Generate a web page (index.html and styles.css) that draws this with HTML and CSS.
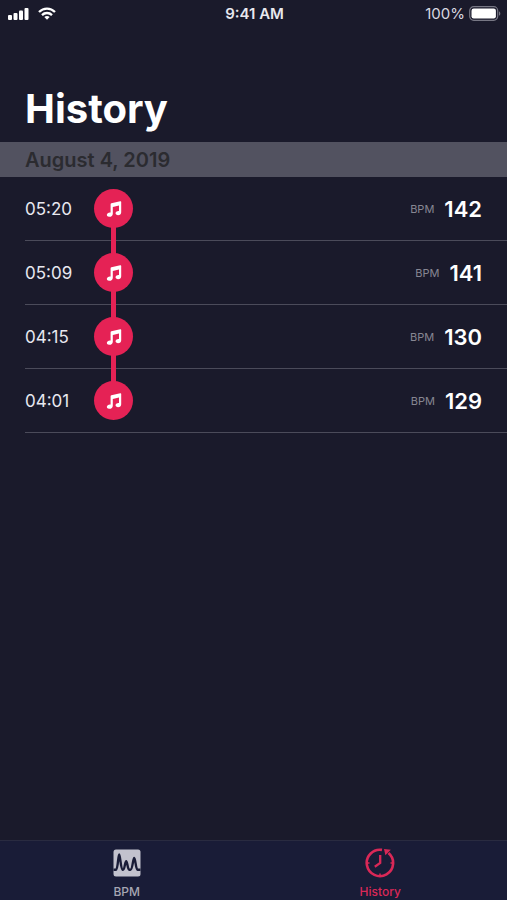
FILE: index.html
```html
<!DOCTYPE html>
<html lang="en">
<head>
<meta charset="utf-8">
<meta name="viewport" content="width=device-width, initial-scale=1">
<title>History</title>
<link rel="stylesheet" href="styles.css">
</head>
<body>
<svg class="defs" aria-hidden="true">
  <symbol id="note" viewBox="0 0 16 16">
    <path fill="currentColor" d="M4.600 3.200Q4.700 2.500 5.400 2.300L14.200.2Q15.200 0 15.200 1V11.200C15.200 13 13.900 14.200 12 14.200C9.700 14.200 8.900 12.400 10 11.100C10.900 10.200 12.100 10.100 13 10.100V4.600L6.800 6.100V12.700C6.800 14.600 5.300 15.800 3.400 15.800C1 15.800.2 14 1.300 12.700C2.200 11.700 3.600 11.600 4.600 11.600Z"/>
  </symbol>
</svg>
<div class="status">
  <div class="status-side">
    <svg class="signal" viewBox="0 0 21 13" aria-label="Signal">
      <g fill="#fff"><rect x="0" y="8" width="4" height="5" rx="1"/><rect x="5.500" y="6" width="4" height="7" rx="1"/><rect x="11" y="3.500" width="4" height="9.500" rx="1"/><rect x="16.500" y="1" width="4" height="12" rx="1"/></g>
    </svg>
    <svg class="wifi" viewBox="0 0 18 13" aria-label="Wi-Fi">
      <g fill="none" stroke="#fff" stroke-width="2.300"><path d="M1 5C5.500.4 12.500.4 17 5"/><path d="M4 8.100C6.800 5.300 11.200 5.300 14 8.100"/></g>
      <path fill="#fff" d="M6.300 10C7.800 8.700 10.200 8.700 11.700 10L9 12.800Z"/>
    </svg>
  </div>
  <time class="clock">9:41 AM</time>
  <div class="status-side status-end">
    <span class="charge">100%</span>
    <svg class="battery" viewBox="0 0 32 15" aria-label="Battery">
      <rect x=".7" y=".7" width="28" height="13.600" rx="4" fill="none" stroke="#777784" stroke-width="1.200"/>
      <rect x="2.500" y="2.500" width="24.400" height="10" rx="2.200" fill="#fff"/>
      <path d="M30 5.200C31.800 6 31.800 9 30 9.800Z" fill="#777784"/>
    </svg>
  </div>
</div>
<main>
  <h1>History</h1>
  <section>
    <h2>August 4, 2019</h2>
    <ul class="entries">
      <li><time>05:20</time><span class="dot"><svg><use href="#note"/></svg></span><span class="unit">BPM</span><strong>142</strong></li>
      <li><time>05:09</time><span class="dot"><svg><use href="#note"/></svg></span><span class="unit">BPM</span><strong>141</strong></li>
      <li><time>04:15</time><span class="dot"><svg><use href="#note"/></svg></span><span class="unit">BPM</span><strong>130</strong></li>
      <li><time>04:01</time><span class="dot"><svg><use href="#note"/></svg></span><span class="unit">BPM</span><strong>129</strong></li>
    </ul>
  </section>
</main>
<nav>
  <a href="#bpm">
    <svg viewBox="0 0 30 30" aria-hidden="true">
      <rect x="1.500" y="1.500" width="27" height="27" rx="2.500" fill="#c2c2cd"/>
      <path d="M1.500 21.700H4.200C5.800 21.700 6.200 6.500 7.200 6.500S8.800 21.700 10.500 21.700H11C12.800 21.700 13 13.200 14.200 13.200S15.600 21.700 17.200 21.700H18.500C20.600 21.700 21 10 22.200 10S23.800 21.700 25.500 21.700H28.500" fill="none" stroke="#191c37" stroke-width="2.400" stroke-linejoin="round"/>
    </svg>
    <span>BPM</span>
  </a>
  <a class="active" href="#history" aria-current="page">
    <svg viewBox="0 0 30 30" aria-hidden="true">
      <g fill="none" stroke="currentColor" stroke-width="2.600"><path d="M17 1.900A13.200 13.200 0 1 0 23.500 4.900"/><path d="M15.200 7V15L9.800 18.800" stroke-width="2.300"/><path d="M15 25.500V28M2 15H4.500M25.500 15H28" stroke-width="1.500"/></g>
      <path fill="currentColor" d="M19 1 25.800 1.800 20.400 7.200Z"/>
    </svg>
    <span>History</span>
  </a>
</nav>
</body>
</html>
```
FILE: styles.css
```css
* { box-sizing: border-box; }

body {
  margin: 0;
  min-height: 100vh;
  display: flex;
  flex-direction: column;
  background: #1a1a2b;
  color: #fff;
  font-family: Inter, "Liberation Sans", sans-serif;
}

.defs { position: absolute; width: 0; height: 0; }

.status {
  display: flex;
  align-items: center;
  height: 27px;
  padding: 0 6px 0 8px;
  font-size: 15px;
}
.status-side { flex: 1; display: flex; align-items: center; gap: 9px; }
.status-end { justify-content: flex-end; gap: 4px; }
.signal { width: 21px; height: 13px; }
.wifi { width: 18px; height: 13px; }
.battery { width: 32px; height: 15px; }
.clock { font-weight: 600; color: #e8e8ee; }
.charge { color: #d8d8e0; }

main { flex: 1; }

h1 {
  margin: 0;
  padding: 57px 25px 8px;
  font-size: 40px;
  line-height: 50px;
  font-weight: 700;
}

h2 {
  margin: 0;
  padding: 2px 25px 0;
  background: #525260;
  color: #2b2b30;
  font-size: 20px;
  line-height: 33px;
  font-weight: 600;
}

.entries { list-style: none; margin: 0; padding: 0 0 0 25px; }

.entries li {
  display: flex;
  align-items: center;
  height: 64px;
  padding-right: 25px;
  border-bottom: 1px solid #4b4b5a;
}
.entries time { width: 69px; font-size: 17px; color: #e8e8f0; }

.dot {
  position: relative;
  display: grid;
  place-items: center;
  width: 39px;
  height: 39px;
  border-radius: 50%;
  background: #e52255;
}
.dot svg { width: 16px; height: 16px; }

/* Connector down to the next entry */
li:not(:last-child) .dot::after {
  content: "";
  position: absolute;
  top: 38px;
  left: 17px;
  width: 5px;
  height: 27px;
  background: #e52255;
}

.unit { margin-left: auto; font-size: 11px; color: #868692; }
strong { margin-left: 10px; font-size: 22px; font-weight: 600; }

nav {
  display: flex;
  height: 60px;
  background: #191c37;
  border-top: 1px solid #292b40;
}
nav a {
  flex: 1;
  display: flex;
  flex-direction: column;
  align-items: center;
  gap: 6px;
  padding-top: 7px;
  color: #a6a6b3;
  font-size: 12px;
  line-height: 16px;
  font-weight: 500;
  text-decoration: none;
}
nav svg { width: 30px; height: 30px; }
nav .active { color: #da2857; }
```
